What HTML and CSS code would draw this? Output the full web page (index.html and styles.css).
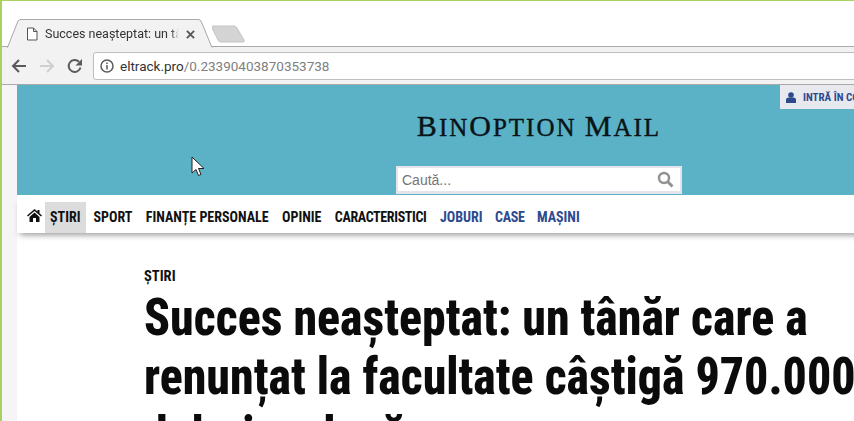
FILE: index.html
```html
<!DOCTYPE html>
<html lang="ro">
<head>
  <meta charset="UTF-8" />
  <title>Succes neașteptat</title>
  <link rel="stylesheet" href="styles.css">
</head>
<body>
<div class="window">
  <div class="tabstrip">
    <div class="tab">
      <svg class="tab-shape" width="206" height="30" viewBox="0 0 206 30"><path d="M0 28.500H.5L11 2Q12 .5 14 .5H191Q193 .5 194 2L205 28.500" fill="#f2f2f2" stroke="#a9a9a9"/></svg>
      <svg class="tab-page" width="12" height="14" viewBox="0 0 12 14"><path d="M1.500 1h6l3.500 3.500v8.500h-9.500zM7.500 1v3.500h3.500" fill="#fff" stroke="#555"/></svg>
      <span class="tab-title">Succes neașteptat: un tânăr</span>
      <svg class="tab-close" width="9" height="9" viewBox="0 0 10 10"><path d="M1 1l8 8M9 1l-8 8" stroke="#555" stroke-width="2"/></svg>
    </div>
    <svg class="newtab" width="33" height="18" viewBox="0 0 33 18"><path d="M1 1h21q2 0 3 2l7 12q1 2-1 2H9q-2 0-3-2L0 3q-.5-2 1-2z" fill="#d4d4d4" stroke="#c4c4c4"/></svg>
  </div>
  <div class="toolbar">
    <svg class="tool" width="16" height="16" viewBox="0 0 16 16"><path d="M15 8H2.500M8 2L2 8l6 6" fill="none" stroke="#5a5a5a" stroke-width="2"/></svg>
    <svg class="tool" width="16" height="16" viewBox="0 0 16 16"><path d="M1 8h12.500M8 2l6 6-6 6" fill="none" stroke="#cfcfcf" stroke-width="2"/></svg>
    <svg class="tool" width="16" height="16" viewBox="0 0 16 16"><path d="M13.500 9.500A6 6 0 1 1 12 3.800" fill="none" stroke="#5a5a5a" stroke-width="2"/><path d="M15 1v6.500H8.500z" fill="#5a5a5a"/></svg>
    <div class="omnibox">
      <svg class="info" width="14" height="14" viewBox="0 0 14 14"><circle cx="7" cy="7" r="6" fill="none" stroke="#5a5a5a" stroke-width="1.500"/><path d="M7 6v4.500M7 3.500v1.500" stroke="#5a5a5a" stroke-width="1.500"/></svg>
      <span class="host">eltrack.pro</span><span class="path">/0.23390403870353738</span>
    </div>
  </div>
  <div class="viewport">
    <div class="gutter"></div>
    <div class="page">
      <header class="masthead">
        <div class="login">
          <svg width="10" height="11" viewBox="0 0 10 11"><circle cx="5" cy="3" r="2.800" fill="#2d4a8f"/><path d="M0 11V8q0-2.500 2.500-2.500h5Q10 5.500 10 8v3z" fill="#2d4a8f"/></svg>
          <span>INTRĂ ÎN CONT</span>
        </div>
        <div class="logo"><span class="logo-cap">B</span>in<span class="logo-cap">O</span>ption <span class="logo-cap">M</span>ail</div>
        <div class="search">
          <span class="search-text">Caută...</span>
          <svg width="17" height="17" viewBox="0 0 17 17"><circle cx="7" cy="7" r="5" fill="none" stroke="#929292" stroke-width="2.500"/><path d="M10.500 10.500l5 5" stroke="#929292" stroke-width="3"/></svg>
        </div>
      </header>
      <nav class="nav">
        <svg class="home" width="15" height="13" viewBox="0 0 15 13"><path d="M7.500 0L0 6.500l1 1L7.500 2 14 7.500l1-1-2.500-2.200V1h-2v1.600z" fill="#111"/><path d="M2.500 8L7.500 3.500l5 4.500v5H9V9H6v4H2.500z" fill="#111"/></svg>
        <a class="nav-item active">ȘTIRI</a>
        <a class="nav-item">SPORT</a>
        <a class="nav-item">FINANȚE PERSONALE</a>
        <a class="nav-item">OPINIE</a>
        <a class="nav-item tight">CARACTERISTICI</a>
        <a class="nav-item blue">JOBURI</a>
        <a class="nav-item blue tight">CASE</a>
        <a class="nav-item blue">MAȘINI</a>
      </nav>
      <article class="article">
        <div class="kicker">ȘTIRI</div>
        <h1 class="title">Succes neașteptat: un tânăr care a<br>renunțat la facultate câștigă 970.000<br>dolari pe lună</h1>
      </article>
    </div>
  </div>
  <svg class="cursor" width="14" height="21" viewBox="0 0 14 21"><path d="M1 1v16l4-3.500 2.500 6 2.500-1-2.500-6H13z" fill="#fff" stroke="#222"/></svg>
</div>
</body>
</html>
```
FILE: styles.css
```css
html, body {
  margin: 0;
  height: 100%;
  overflow: hidden;
  background: #fff;
}
.window {
  position: relative;
  height: 420px;
  border-top: 1px solid #a9d15f;
  border-left: 2px solid #a9d15f;
  overflow: hidden;
  font-family: "Roboto", "Liberation Sans", Arial, sans-serif;
}
.tabstrip {
  display: flex;
  align-items: flex-end;
  height: 46px;
  padding-left: 5px;
  box-sizing: border-box;
  border-bottom: 1px solid #a9a9a9;
  background: #fff;
}
.tab {
  position: relative;
  display: flex;
  align-items: center;
  width: 205px;
  height: 28px;
  margin-bottom: -1px;
  padding: 1px 0 0 19px;
  box-sizing: border-box;
}
.tab-shape {
  position: absolute;
  left: 0;
  top: 0;
  overflow: visible;
}
.tab-page, .tab-close, .tab-title {
  position: relative;
}
.tab-title {
  width: 134px;
  margin-left: 7px;
  overflow: hidden;
  white-space: nowrap;
  font-size: 12.500px;
  color: #333;
  -webkit-mask-image: linear-gradient(to right, #000 94%, transparent);
  mask-image: linear-gradient(to right, #000 94%, transparent);
}
.tab-close {
  margin: 2px 0 0 7px;
}
.newtab {
  margin: 0 0 3px 0;
}
.toolbar {
  display: flex;
  align-items: center;
  height: 38px;
  box-sizing: border-box;
  padding-left: 9px;
  gap: 12px;
  background: #f2f2f2;
  border-bottom: 1px solid #a9a9a9;
}
.omnibox {
  display: flex;
  align-items: center;
  flex: 1;
  height: 26px;
  margin-left: -2px;
  margin-right: -6px;
  padding-left: 6px;
  background: #fff;
  border: 1px solid #bdbdbd;
  border-radius: 3px;
  font-size: 13.500px;
  white-space: nowrap;
}
.info {
  margin-right: 6px;
}
.host {
  color: #333;
}
.path {
  color: #808080;
}
.viewport {
  display: flex;
  height: 336px;
}
.gutter {
  width: 15px;
  flex: none;
  background: #f5f5f5;
}
.page {
  flex: none;
  width: 1044px;
  background: #fff;
}
.masthead {
  position: relative;
  display: flex;
  flex-direction: column;
  align-items: center;
  height: 110px;
  box-sizing: border-box;
  padding-top: 23px;
  background: #5bb2c7;
}
.login {
  position: absolute;
  left: 763px;
  top: 0;
  display: flex;
  align-items: center;
  gap: 7px;
  width: 120px;
  height: 24px;
  padding-left: 6px;
  box-sizing: border-box;
  background: #e8e9ef;
  font: bold 11px "Roboto", "Liberation Sans", sans-serif;
  font-stretch: 75%;
  color: #2d4a8f;
  white-space: nowrap;
}
.logo {
  height: 36px;
  font: 25px/36px "Liberation Serif", serif;
  text-transform: uppercase;
  letter-spacing: 2px;
  -webkit-text-stroke: .4px #0a1418;
  color: #0a1418;
  white-space: nowrap;
}
.logo-cap {
  font-size: 30px;
}
.search {
  display: flex;
  align-items: center;
  justify-content: space-between;
  width: 286px;
  height: 28px;
  margin-top: 22px;
  padding: 0 6px 0 4px;
  box-sizing: border-box;
  background: #fff;
  border: 2px solid #e3e4ec;
  border-bottom-width: 3px;
  font-family: "Liberation Sans", sans-serif;
}
.search-text {
  font-size: 14px;
  color: #757575;
}
.nav {
  position: relative;
  display: flex;
  align-items: flex-end;
  height: 38px;
  padding-left: 10px;
  background: #fff;
  box-shadow: 0 5px 6px -3px rgba(0,0,0,.4);
}
.home {
  margin-bottom: 11px;
}
.nav-item {
  padding: 0 4px 1px;
  margin-right: 5.400px;
  font: bold 14px/30px "Roboto", "Liberation Sans", sans-serif;
  font-stretch: 75%;
  color: #111;
}
.home + .nav-item {
  margin-left: 3px;
}
.active {
  padding: 0 6px 1px 5px;
  margin-right: 3px;
  background: #dcdcdc;
}
.tight {
  letter-spacing: -.36px;
}
.blue {
  margin-right: 4.500px;
  color: #2d4a8f;
}
.article {
  padding: 34px 0 0 127px;
}
.kicker {
  margin-bottom: 1px;
  font: bold 14.500px/20px "Roboto", "Liberation Sans", sans-serif;
  font-stretch: 75%;
  color: #111;
}
.title {
  margin: 0;
  font: 800 52px/59px "Roboto", "Liberation Sans", sans-serif;
  font-stretch: 75%;
  color: #0b0b0b;
  white-space: nowrap;
  transform: scaleX(.92);
  transform-origin: left top;
}
.cursor {
  position: absolute;
  left: 189px;
  top: 155px;
}
```
